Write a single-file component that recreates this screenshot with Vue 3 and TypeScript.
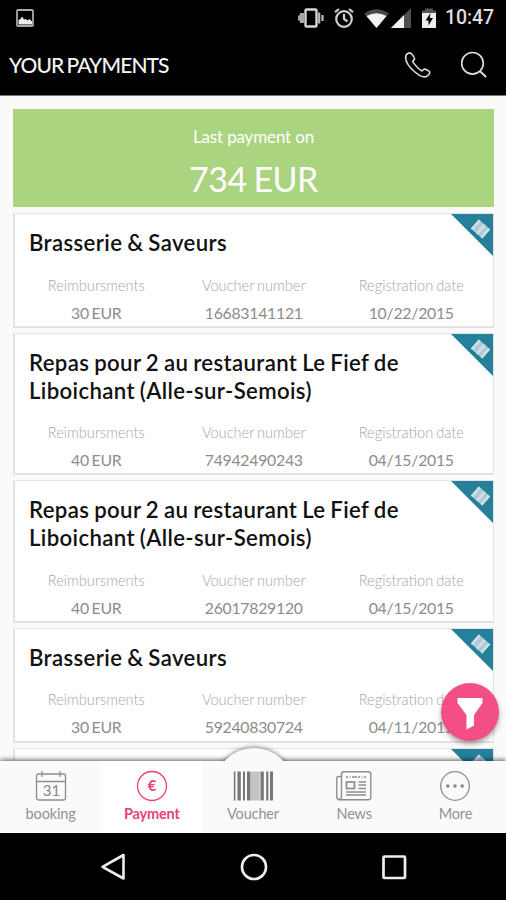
<script setup lang="ts">
interface Payment {
  title: string
  amount: string
  voucher: string
  date: string
}

const payments: Payment[] = [
  { title: 'Brasserie & Saveurs', amount: '30 EUR', voucher: '16683141121', date: '10/22/2015' },
  { title: 'Repas pour 2 au restaurant Le Fief de Liboichant (Alle-sur-Semois)', amount: '40 EUR', voucher: '74942490243', date: '04/15/2015' },
  { title: 'Repas pour 2 au restaurant Le Fief de Liboichant (Alle-sur-Semois)', amount: '40 EUR', voucher: '26017829120', date: '04/15/2015' },
  { title: 'Brasserie & Saveurs', amount: '30 EUR', voucher: '59240830724', date: '04/11/2015' },
  { title: '', amount: '', voucher: '', date: '' },
]

// [x offset, width] of each barcode stripe
const bars: [number, number][] = [
  [0.8, 1.6], [4.5, 3.3], [10, 2], [14, 3.3], [27.5, 3.3], [33.2, 2.2], [37, 3],
]
</script>

<template>
  <div class="screen">
    <header class="header">
      <div class="status">
        <svg class="picture" width="18" height="18" viewBox="0 0 18 18">
          <rect x="1" y="1" width="16" height="16" rx="1" fill="none" stroke="#a9a9a9" stroke-width="1.8" />
          <path d="M2.500 15.500V11L4.500 10L6 7.500L8 10.500L10 10L11.500 11.500L13.500 10L16 12.500V15.500Z" fill="#eee" />
        </svg>
        <div class="status-right">
          <svg width="26" height="20" viewBox="0 0 26 20">
            <rect x="7.500" y="1.500" width="11" height="17" rx="1" fill="none" stroke="#d5d5d5" stroke-width="2.400" />
            <path d="M0 8L2 6.500V5H6V15H2V13.500L0 12Z" fill="#a8a8a8" />
            <path d="M21.200 4.500V15.500M24.500 7V13" stroke="#bbb" stroke-width="2.200" />
          </svg>
          <svg class="alarm" width="20" height="20" viewBox="0 0 20 20" fill="none" stroke="#d0d0d0" stroke-width="2.200">
            <circle cx="10" cy="11" r="7.800" />
            <path d="M10 6V11L13.500 13.500M1 4.200L5 1M19 4.200L15 1" />
          </svg>
          <svg class="wifi" width="25" height="19" viewBox="0 0 25 19">
            <path d="M0 4.500Q12.500 -4 25 4.500L12.500 19Z" fill="#484848" />
            <path d="M2.500 7Q12.500 1.500 22.500 7L12.500 19Z" fill="#f2f2f2" />
          </svg>
          <svg class="signal" width="20" height="20" viewBox="0 0 20 20">
            <path d="M0 20L20 0V20Z" fill="#505050" />
            <path d="M0 20L13 7V20Z" fill="#f5f5f5" />
          </svg>
          <svg class="battery" width="14" height="20" viewBox="0 0 14 20">
            <path d="M0 2.500H3V0.500H11V2.500H14V6H0Z" fill="#555" />
            <path d="M0 5H14V20H0Z" fill="#eee" />
            <path d="M8.500 5L3.500 12.500H6.500V17.500L11 10H7.800Z" fill="#000" />
          </svg>
          <span class="clock">10:47</span>
        </div>
      </div>
      <div class="title-bar">
        <h1>YOUR PAYMENTS</h1>
        <svg class="phone" width="28" height="28" viewBox="0 0 28 28" fill="none" stroke="#ddd" stroke-width="1.600">
          <path d="M4.200 2.200C3 2.700 1.500 4.500 1.700 7C2 12 6.500 17.500 11.500 21.500C15.500 24.700 19.500 26.800 22.500 25.500C24 24.800 25.500 23.500 25.800 21.700C26 20.500 24.500 19.700 21.500 18.300C20.200 17.700 19.300 18.400 18.500 19.600C17.900 20.300 16.700 19.500 14.500 17.500C12 15.200 9.800 12.500 8.700 10.700C8.500 9.900 9.500 9.500 10.300 8.600C11 7.800 10.700 7 8.900 4.400C7.500 2.300 6 1.400 4.200 2.200Z" />
        </svg>
        <svg class="search" width="28" height="28" viewBox="0 0 28 28" fill="none" stroke="#ddd" stroke-width="1.600">
          <circle cx="12.500" cy="12.300" r="10.800" />
          <path d="M19.800 20L26 26" stroke-width="2" />
        </svg>
      </div>
    </header>

    <main class="content">
      <section class="summary">
        <p class="summary-label">Last payment on</p>
        <p class="summary-amount">734 EUR</p>
      </section>
      <article v-for="(payment, i) in payments" :key="i" class="card">
        <h2>{{ payment.title }}</h2>
        <dl v-if="payment.title">
          <div><dt>Reimbursments</dt><dd>{{ payment.amount }}</dd></div>
          <div><dt>Voucher number</dt><dd>{{ payment.voucher }}</dd></div>
          <div><dt>Registration date</dt><dd>{{ payment.date }}</dd></div>
        </dl>
        <svg class="corner" width="42" height="42" viewBox="0 0 42 42">
          <path d="M0 0H42V42Z" fill="#25809b" />
          <g transform="translate(29.500 15) rotate(41)">
            <rect x="-7.500" y="-6" width="15" height="12" fill="#b9d0da" />
            <path d="M-3 -6V6M3.500 -6V6" stroke="#a6c3cf" stroke-width="1.200" />
            <path d="M-6.500 -6V6M0.500 -6V6M6.500 -6V6" stroke="#d3e2e9" stroke-width="2" />
          </g>
        </svg>
      </article>
    </main>

    <button class="filter" aria-label="Filter">
      <svg width="26" height="32" viewBox="0 0 26 32">
        <path d="M0.500 0H25.500V5L17 17V27.500L9.500 31.500V17L0.500 5Z" fill="#fff" />
      </svg>
    </button>

    <nav class="tabs">
      <div class="hump"><i></i></div>
      <a class="tab">
        <svg width="32" height="32" viewBox="0 0 32 32" fill="none" stroke="#8e8e8e" stroke-width="1.300">
          <rect x="1.500" y="4" width="29" height="26" rx="2" />
          <path d="M1.500 11.500H30.500M7 1V7M25 1V7" />
          <text x="16.500" y="25.500" text-anchor="middle" class="day">31</text>
        </svg>
        <span>booking</span>
      </a>
      <a class="tab active">
        <svg width="32" height="32" viewBox="0 0 32 32">
          <circle cx="16" cy="16" r="14.500" fill="none" stroke="#e8427a" stroke-width="1.300" />
          <text x="16" y="21" text-anchor="middle" class="euro">€</text>
        </svg>
        <span>Payment</span>
      </a>
      <a class="tab">
        <svg width="40" height="32" viewBox="0 0 40 32">
          <rect x="17.300" y="1.500" width="9.500" height="29" fill="#c4c4c4" />
          <rect v-for="bar in bars" :key="bar[0]" :x="bar[0]" y="1.500" :width="bar[1]" height="29" fill="#777" />
        </svg>
        <span>Voucher</span>
      </a>
      <a class="tab">
        <svg width="36" height="32" viewBox="0 0 36 32" fill="none" stroke="#8e8e8e" stroke-width="1.400">
          <path d="M5.500 26V4Q5.500 1.700 7.800 1.700H32.500Q34.800 1.700 34.800 4V27.500Q34.800 29.800 32.500 29.800H4Q0.800 29.800 0.800 27V8Q0.800 6.500 2.300 6.500H5.500M5.500 26Q5.500 29 3 29.500" />
          <rect x="10.500" y="12" width="8" height="6.500" stroke-width="1.700" />
          <path d="M22.500 12H30M22.500 15H30M22.500 18.500H30M10 22H30M10 25H30" />
          <path d="M10 7H30" stroke-dasharray="2 1.500 1 1.500 5 1" />
        </svg>
        <span>News</span>
      </a>
      <a class="tab">
        <svg width="32" height="32" viewBox="0 0 32 32">
          <circle cx="16" cy="16" r="14.300" fill="none" stroke="#8e8e8e" stroke-width="1.300" />
          <g fill="#888"><circle cx="8.800" cy="16" r="1.800" /><circle cx="16" cy="16" r="1.800" /><circle cx="23.200" cy="16" r="1.800" /></g>
        </svg>
        <span>More</span>
      </a>
    </nav>

    <footer class="system">
      <svg width="28" height="30" viewBox="0 0 28 30"><path d="M24.500 3V26.500L3.500 14.800Z" fill="none" stroke="#eee" stroke-width="2.600" stroke-linejoin="round" /></svg>
      <svg width="30" height="30" viewBox="0 0 30 30"><circle cx="15" cy="15" r="12" fill="none" stroke="#eee" stroke-width="2.700" /></svg>
      <svg width="28" height="30" viewBox="0 0 28 30"><rect x="3.500" y="4.500" width="21.500" height="21.500" rx="1" fill="none" stroke="#eee" stroke-width="2.700" /></svg>
    </footer>
  </div>
</template>

<style>
body {
  margin: 0;
}
</style>

<style scoped>
.screen {
  position: relative;
  width: 506px;
  height: 900px;
  display: flex;
  flex-direction: column;
  overflow: hidden;
  background: #fafafa;
  font-family: Lato, "Liberation Sans", sans-serif;
}
svg {
  display: block;
  flex: none;
}
h1, h2, p, dl, dd {
  margin: 0;
}
.header {
  box-sizing: border-box;
  flex: none;
  height: 96px;
  background: #000;
  border-bottom: 1px solid #777;
}
.status {
  height: 36px;
  display: flex;
  align-items: center;
  justify-content: space-between;
  padding: 0 10px 0 16px;
}
.status-right {
  display: flex;
  align-items: center;
}
.alarm {
  margin-left: 10px;
}
.wifi {
  margin-left: 10px;
}
.signal {
  margin-left: 2px;
}
.battery {
  margin-left: 11px;
}
.clock {
  width: 51px;
  margin-left: 9px;
  font: 500 19.500px/36px Roboto, sans-serif;
  letter-spacing: -0.100px;
  color: #ddd;
  white-space: nowrap;
}
.title-bar {
  display: flex;
  align-items: center;
  height: 57px;
  padding: 0 18px 0 9px;
}
h1 {
  flex: 1;
  font-size: 21px;
  font-weight: 500;
  letter-spacing: -0.880px;
  word-spacing: -1.500px;
  color: #f4f4f4;
}
.search {
  margin-left: 28px;
}
.content {
  flex: none;
  height: 665px;
  box-sizing: border-box;
  overflow: hidden;
  padding: 13px 12px 0 13px;
}
.summary {
  box-sizing: border-box;
  height: 98px;
  margin-bottom: 6px;
  padding-top: 17px;
  background: #aad47f;
  color: #fff;
  text-align: center;
}
.summary-label {
  font-size: 17px;
  line-height: 22px;
  letter-spacing: -0.150px;
}
.summary-amount {
  margin-top: 10px;
  font-size: 34px;
  line-height: 42px;
  letter-spacing: -0.500px;
  word-spacing: -1.500px;
}
.card {
  position: relative;
  box-sizing: border-box;
  min-height: 114.800px;
  margin-bottom: 5px;
  padding: 15px 0 0 14px;
  border: 2px solid #e2e2e2;
  border-width: 1.500px 1px 2px 2px;
  background: #fff;
}
h2 {
  width: 400px;
  font-size: 22.200px;
  font-weight: 600;
  line-height: 28px;
  letter-spacing: 0.360px;
  word-spacing: -1px;
  color: #111;
}
dl {
  display: flex;
  height: 68.500px;
  padding-top: 16.500px;
  box-sizing: border-box;
  margin-left: -11.500px;
}
dl div {
  width: 157.500px;
  flex: none;
  text-align: center;
}
dt {
  font-size: 14.600px;
  font-weight: 300;
  line-height: 24px;
  word-spacing: -1px;
  color: #a6a6a6;
}
dd {
  padding-top: 3px;
  font-size: 15.800px;
  line-height: 24px;
  letter-spacing: -0.250px;
  word-spacing: -1px;
  color: #8c8c8c;
}
.corner {
  position: absolute;
  top: 0;
  right: 0;
}
.filter {
  position: absolute;
  left: 441px;
  top: 683px;
  width: 58px;
  height: 58px;
  display: flex;
  align-items: center;
  justify-content: center;
  padding: 3px 0 0;
  border: 0;
  border-radius: 50%;
  background: #f34f84;
  box-shadow: 0 3px 5px rgba(0, 0, 0, 0.35);
}
.tabs {
  position: relative;
  flex: none;
  height: 72px;
  display: flex;
  background: #fafafa;
  box-shadow: 0 -1px 5px rgba(0, 0, 0, 0.65);
}
.tab {
  position: relative;
  flex: 1;
  display: flex;
  flex-direction: column;
  align-items: center;
  padding-top: 9px;
  color: #929292;
  font-size: 14.500px;
  letter-spacing: -0.150px;
}
.tab span {
  margin-top: 1.500px;
  line-height: 20px;
}
.tab.active {
  background: #fff;
  color: #ea3f79;
  font-weight: 700;
}
.hump {
  position: absolute;
  left: 203px;
  bottom: 72px;
  width: 100px;
  height: 20px;
  overflow: hidden;
}
.hump i {
  position: absolute;
  left: 11px;
  top: 7px;
  width: 80px;
  height: 80px;
  border-radius: 50%;
  background: #fafafa;
  box-shadow: 0 -1px 4px rgba(0, 0, 0, 0.45);
}
.day {
  font-size: 15px;
  letter-spacing: 0;
  fill: #888;
  stroke: none;
}
.euro {
  font-size: 15px;
  font-weight: 700;
  fill: #e8427a;
}
.system {
  flex: 1;
  display: flex;
  align-items: center;
  justify-content: space-between;
  padding: 0 98px 0 99px;
  background: #000;
}
</style>
